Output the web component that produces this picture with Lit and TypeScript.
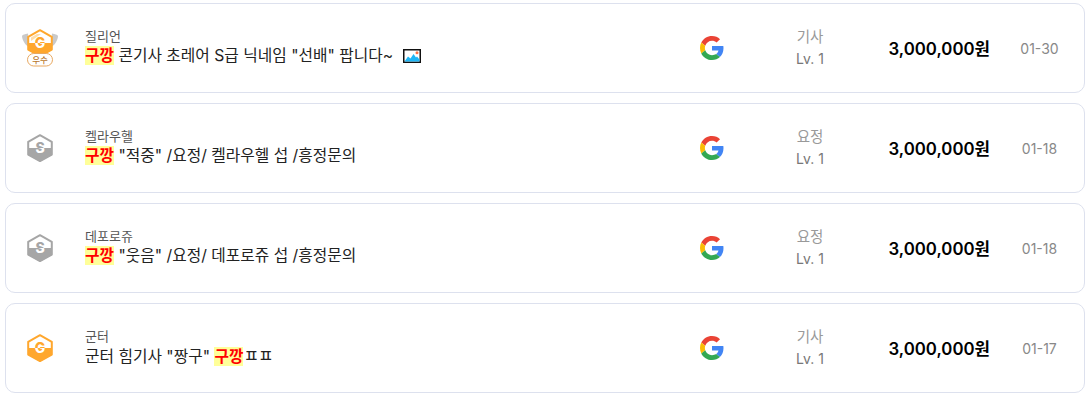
import { LitElement, html, css, svg } from "lit";
import { customElement } from "lit/decorators.js";

const hl = html`<span class="hl">구깡</span>`;

const hex = (id: string, color: string, letter: string, ox: number, oy: number) => svg`
  <g transform="translate(${ox} ${oy})">
    <defs>
      <clipPath id="${id}t"><rect x="0" y="0" width="26" height="14"/></clipPath>
      <clipPath id="${id}b"><rect x="0" y="14" width="26" height="16"/></clipPath>
    </defs>
    <path d="M13 1.200 24.800 7.800V20.500L13 27 1.200 20.500V7.800z" fill="#fff" stroke="${color}" stroke-width="2" stroke-linejoin="round"/>
    <path d="M1 14H25V20.800L13 27.800 1 20.800z" fill="${color}"/>
    <text x="13" y="18.500" text-anchor="middle" class="bl" fill="${color}" clip-path="url(#${id}t)">${letter}</text>
    <text x="13" y="18.500" text-anchor="middle" class="bl" fill="#fff" clip-path="url(#${id}b)">${letter}</text>
  </g>`;

const emblemHex = (id: string, color: string, letter: string) => svg`
  <svg width="26" height="28" viewBox="0 0 26 28">${hex(id, color, letter, 0, 0)}</svg>`;

const emblemGold = svg`
  <svg width="36" height="38" viewBox="0 0 36 38">
    <g fill="#c9c9c9">
      <path d="M6 4.500C3 5 .5 5.500 0 7c.3 3.500 2.500 9 7 11z"/>
      <path d="M30 4.500c3 .5 5.500 1 6 2.500-.3 3.500-2.500 9-7 11z"/>
    </g>
    ${hex("gold", "#ffa72d", "G", 5, 0)}
    <path d="M9 12V8.500L15 5 19 5z" fill="#ffd596" opacity=".8"/>
    <rect x="5.500" y="24.500" width="25" height="12.500" rx="6.200" fill="#fff" stroke="#e8a860"/>
    <text x="18" y="34" text-anchor="middle" class="bs" fill="#b9772c">우수</text>
  </svg>`;

const google = svg`
  <svg width="24" height="24" viewBox="0 0 48 48">
    <path fill="#EA4335" d="M24 9.500c3.540 0 6.710 1.220 9.210 3.600l6.850-6.850C35.900 2.380 30.470 0 24 0 14.620 0 6.510 5.380 2.560 13.220l7.980 6.190C12.430 13.720 17.740 9.500 24 9.500z"/>
    <path fill="#4285F4" d="M46.980 24.550c0-1.570-.15-3.090-.38-4.550H24v9.020h12.940c-.58 2.960-2.260 5.480-4.780 7.180l7.730 6c4.510-4.180 7.090-10.360 7.090-17.650z"/>
    <path fill="#FBBC05" d="M10.530 28.590c-.48-1.450-.76-2.990-.76-4.590s.27-3.140.76-4.590l-7.980-6.190C.92 16.460 0 20.120 0 24c0 3.880.92 7.540 2.560 10.780l7.970-6.190z"/>
    <path fill="#34A853" d="M24 48c6.480 0 11.930-2.130 15.890-5.810l-7.730-6c-2.150 1.450-4.920 2.300-8.160 2.300-6.260 0-11.570-4.220-13.470-9.910l-7.980 6.190C6.510 42.620 14.620 48 24 48z"/>
  </svg>`;

const pic = svg`
  <svg class="pic" width="18" height="14" viewBox="0 0 18 14">
    <rect x=".75" y=".75" width="16.500" height="12.500" fill="#fff" stroke="#111" stroke-width="1.500"/>
    <path d="M1.500 12.500 5 7.500l2.500 2 3-4.500 2.500 3.500 1-1 2.500 3v2z" fill="#1fb6f5"/>
    <circle cx="14" cy="3.800" r="1.500" fill="#ff7043"/>
  </svg>`;

interface Row {
  emblem: unknown;
  seller: string;
  title: unknown;
  job: string;
  date: string;
}

const rows: Row[] = [
  { emblem: emblemGold, seller: "질리언", title: html`${hl} 콘기사 초레어 S급 닉네임 "선배" 팝니다~ ${pic}`, job: "기사", date: "01-30" },
  { emblem: emblemHex("s1", "#a6a6a6", "S"), seller: "켈라우헬", title: html`${hl} "적중" /요정/ 켈라우헬 섭 /흥정문의`, job: "요정", date: "01-18" },
  { emblem: emblemHex("s2", "#a6a6a6", "S"), seller: "데포로쥬", title: html`${hl} "웃음" /요정/ 데포로쥬 섭 /흥정문의`, job: "요정", date: "01-18" },
  { emblem: emblemHex("g4", "#ffa72d", "G"), seller: "군터", title: html`군터 힘기사 "짱구" ${hl}<span class="jamo">ㅍ</span><span class="jamo">ㅍ</span>`, job: "기사", date: "01-17" },
];

@customElement("app-root")
export class AppRoot extends LitElement {
  static styles = css`
    :host {
      display: block;
      font-family: Inter, "Noto Sans CJK KR", sans-serif;
      background: #fff;
      height: 401px;
      box-sizing: border-box;
      padding: 3px 6px 0 5px;
    }
    .list { display: flex; flex-direction: column; gap: 10px; }
    .card {
      box-sizing: border-box;
      height: 90px;
      border: 1px solid #dde1ee;
      border-radius: 10px;
      display: grid;
      grid-template-columns: 79px 1fr 24px 162px 104px 94px;
      align-items: center;
    }
    .emblem { display: flex; justify-content: center; padding-right: 11px; }
    .emblem svg { display: block; }
    .info { display: flex; flex-direction: column; padding-bottom: 2px; }
    .seller { font-size: 13px; line-height: 16px; margin-bottom: 2px; color: #555; }
    .title { font-size: 15.75px; line-height: 20px; color: #222; font-weight: 400; }
    .hl { background: #ffff99; color: #f00; font-weight: 700; }
    .jamo { font-size: 17px; margin-right: -1px; }
    .pic { vertical-align: -2px; margin-left: 5px; }
    .g { display: flex; }
    .level { display: flex; flex-direction: column; align-items: center; font-size: 14.500px; line-height: 21.500px; color: #999; padding: 0 0 1px 10px; }
    .level .lv { color: #777; font-size: 14px; }
    .price { font-size: 16.800px; font-weight: 600; color: #000; text-align: right; white-space: nowrap; }
    .date { font-size: 14px; color: #888; text-align: center; padding-left: 5px; }
    .bl { font: 800 14px Inter, sans-serif; }
    .bs { font: 500 8.500px "Noto Sans CJK KR", sans-serif; }
  `;

  render() {
    return html`<div class="list">
      ${rows.map(
        (r) => html`<div class="card">
          <div class="emblem">${r.emblem}</div>
          <div class="info">
            <div class="seller">${r.seller}</div>
            <div class="title">${r.title}</div>
          </div>
          <div class="g">${google}</div>
          <div class="level"><span>${r.job}</span><span class="lv">Lv. 1</span></div>
          <div class="price">3,000,000원</div>
          <div class="date">${r.date}</div>
        </div>`
      )}
    </div>`;
  }
}
